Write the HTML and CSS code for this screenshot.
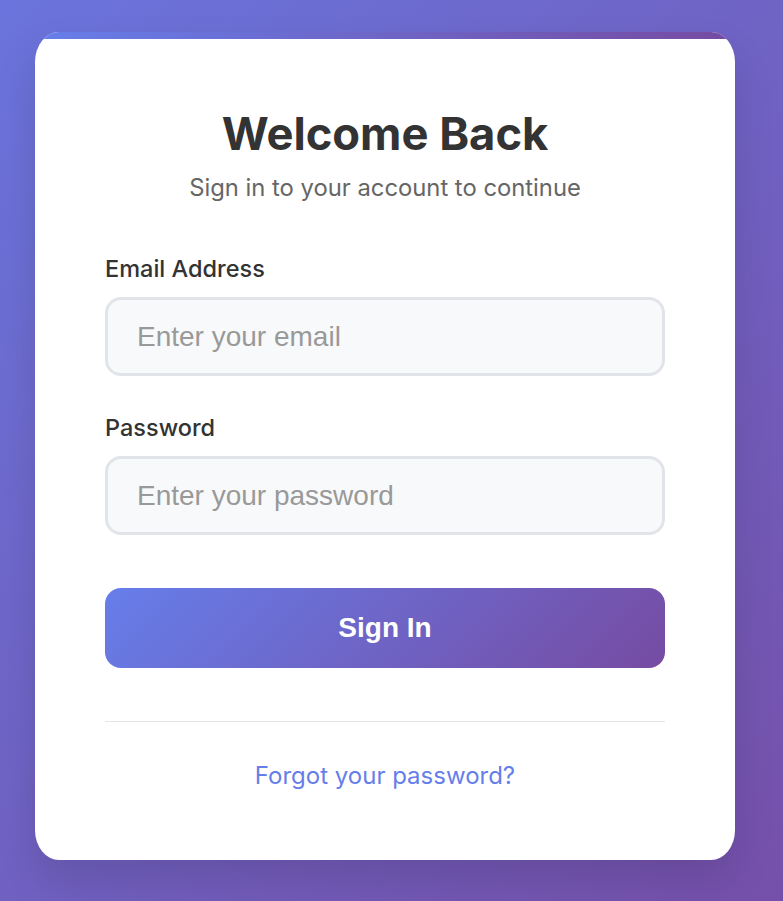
FILE: index.html
```html
<!DOCTYPE html>
<html lang="en">
<head>
    <meta charset="UTF-8">
    <meta name="viewport" content="width=device-width, initial-scale=1.0">
    <title>Welcome Back</title>
    <link rel="stylesheet" href="styles.css">
</head>
<body>
    <div class="login-card">
        <div class="login-header">
            <h1>Welcome Back</h1>
            <p>Sign in to your account to continue</p>
        </div>
        <form class="login-form" onsubmit="event.preventDefault()">
            <div class="form-group">
                <label for="email">Email Address</label>
                <input type="email" id="email" placeholder="Enter your email">
            </div>
            <div class="form-group">
                <label for="password">Password</label>
                <input type="password" id="password" placeholder="Enter your password">
            </div>
            <button type="submit" class="login-btn">Sign In</button>
        </form>
        <div class="login-footer">
            <a href="#">Forgot your password?</a>
        </div>
    </div>
</body>
</html>
```

FILE: styles.css
```css
* {
    box-sizing: border-box;
}
body {
    margin: 0;
    min-height: 901px;
    font-family: Inter, "Noto Sans", sans-serif;
    background: linear-gradient(135deg, #6a74dc 0%, #7550aa 100%);
    padding: 32px 48px 41px 35px;
}
.login-card {
    position: relative;
    width: 700px;
    background: white;
    border-radius: 24px / 30px;
    overflow: hidden;
    padding: 79px 70px 69px;
    box-shadow: 0 20px 40px rgba(0, 0, 0, 0.12);
}
.login-card::before {
    content: "";
    position: absolute;
    top: 0;
    left: 0;
    right: 0;
    height: 7px;
    background: linear-gradient(90deg, #667eea, #764ba2);
}
.login-header {
    text-align: center;
    margin-bottom: 52px;
}
.login-header h1 {
    margin: 0 0 16px;
    font-size: 45.3px;
    line-height: 46px;
    font-weight: 700;
    color: #333;
}
.login-header p {
    margin: 0;
    font-size: 23.8px;
    line-height: 30px;
    color: #666;
}
.form-group {
    margin-bottom: 38px;
}
.form-group label {
    display: block;
    font-size: 23.5px;
    line-height: 28px;
    font-weight: 500;
    color: #333;
    margin-bottom: 14px;
}
.form-group input {
    display: block;
    width: 100%;
    height: 79px;
    padding: 0 29px;
    border: 3px solid #e1e5e9;
    border-radius: 16px;
    background: #f8f9fa;
    font-family: "Liberation Sans", Arial, sans-serif;
    font-size: 28px;
    color: #333;
    outline: none;
}
.form-group input::placeholder {
    color: #999;
}
.login-btn {
    display: block;
    width: 100%;
    height: 80px;
    margin-top: 53px;
    border: none;
    border-radius: 16px;
    background: linear-gradient(135deg, #667eea 0%, #764ba2 100%);
    color: white;
    font-family: "Liberation Sans", Arial, sans-serif;
    font-size: 28px;
    font-weight: bold;
    cursor: pointer;
}
.login-footer {
    margin-top: 53px;
    padding-top: 39px;
    border-top: 1px solid #e5e5e5;
    text-align: center;
    font-size: 24px;
    line-height: 30px;
}
.login-footer a {
    color: #667eea;
    text-decoration: none;
}
```
